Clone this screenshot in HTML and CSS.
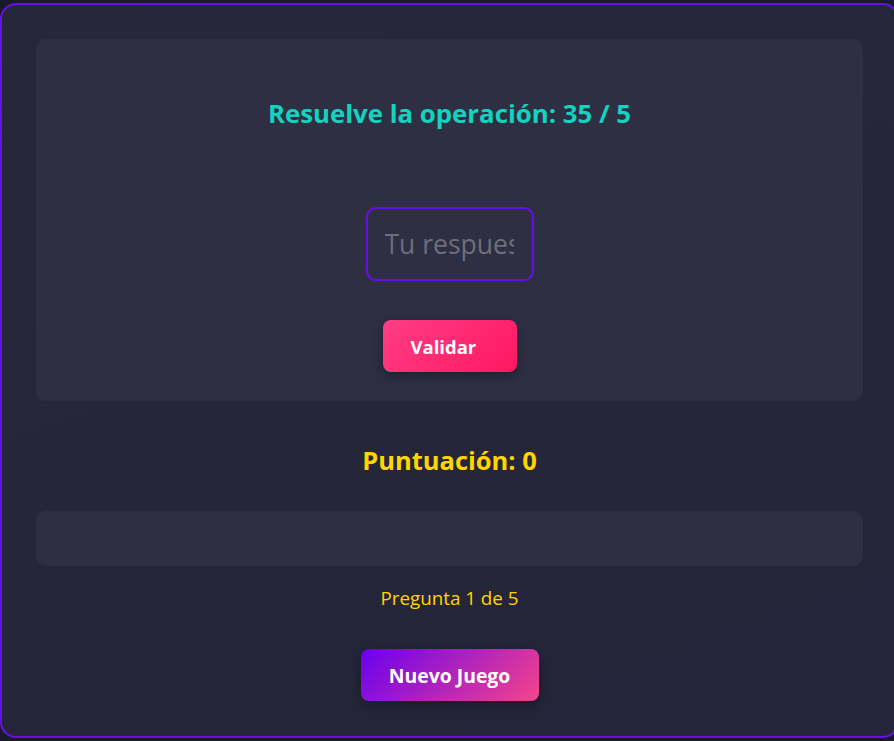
FILE: index.html
```html
<!DOCTYPE html>
<html lang="es">
<head>
<meta charset="utf-8">
<title>Juego de operaciones</title>
<link rel="stylesheet" href="styles.css">
</head>
<body>
<div class="game">
  <div class="card question-card">
    <h2 class="question">Resuelve la operación: 35 / 5</h2>
    <input class="answer" type="text" placeholder="Tu respuesta">
    <button class="btn btn-validate">Validar</button>
  </div>
  <div class="score">Puntuación: 0</div>
  <div class="card feedback"></div>
  <div class="progress">Pregunta 1 de 5</div>
  <button class="btn btn-new">Nuevo Juego</button>
</div>
</body>
</html>
```
FILE: styles.css
```css
html, body {
  margin: 0;
  padding: 0;
  overflow: hidden;
  background: #181a2b;
  font-family: "Open Sans", "Noto Sans", sans-serif;
}
.game {
  box-sizing: border-box;
  width: 899px;
  height: 735px;
  margin-top: 3px;
  border: 2px solid #6a0ee8;
  border-radius: 16px;
  background: linear-gradient(160deg, #262739 0%, #24253a 100%);
  padding: 34px 34px 0;
  display: flex;
  flex-direction: column;
  align-items: center;
}
.card {
  align-self: stretch;
  background: #2e2f43;
  border-radius: 10px;
}
.question-card {
  display: flex;
  flex-direction: column;
  align-items: center;
  padding: 58px 0 29px;
}
.question {
  margin: 0;
  font-size: 25.8px;
  line-height: 32px;
  font-weight: 700;
  color: #12d3bf;
}
.answer {
  box-sizing: border-box;
  margin-top: 78px;
  width: 168px;
  height: 74px;
  border: 2px solid #6a0ee8;
  border-radius: 10px;
  background: #2e2f43;
  padding: 0 18px 0 17px;
  font-family: inherit;
  font-size: 26.5px;
  color: #ddd;
  outline: none;
}
.answer::placeholder {
  color: #6e6e7c;
}
.btn {
  border: none;
  border-radius: 8px;
  color: #fff;
  font-family: inherit;
  font-weight: 700;
  font-size: 18.5px;
  height: 52px;
  box-shadow: 0 4px 12px rgba(0, 0, 0, 0.35);
}
.btn-validate {
  margin-top: 39px;
  width: 134px;
  text-align: left;
  padding: 0 0 0 28px;
  background: linear-gradient(135deg, #ff3d83 0%, #ff1763 100%);
}
.score {
  margin-top: 43px;
  font-size: 25.5px;
  line-height: 32px;
  font-weight: 700;
  color: #ffd500;
}
.feedback {
  margin-top: 35px;
  height: 55px;
}
.progress {
  margin-top: 20px;
  font-size: 18.8px;
  line-height: 24px;
  color: #ffd500;
}
.btn-new {
  margin-top: 39px;
  width: 178px;
  font-size: 19.4px;
  background: linear-gradient(135deg, #6a00f0 0%, #f5458a 100%);
}
```
